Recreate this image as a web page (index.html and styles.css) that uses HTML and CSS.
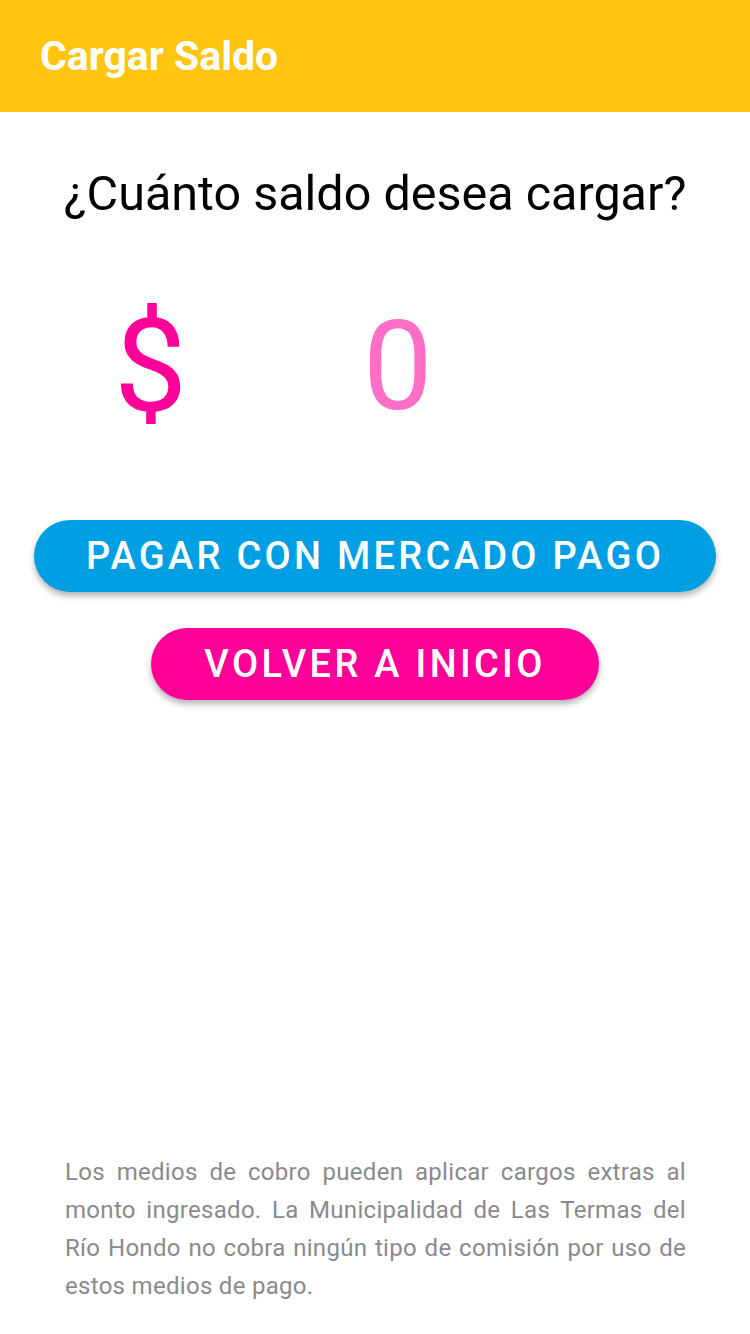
FILE: index.html
```html
<!DOCTYPE html>
<html lang="es">
<head>
<meta charset="utf-8">
<title>Cargar Saldo</title>
<link rel="stylesheet" href="styles.css">
</head>
<body>
<div class="screen">
  <header class="appbar">
    <h1 class="appbar-title">Cargar Saldo</h1>
  </header>
  <main class="content">
    <h2 class="question">¿Cuánto saldo desea cargar?</h2>
    <div class="amount">
      <span class="currency">$</span>
      <span class="value">0</span>
    </div>
    <div class="actions">
      <button class="btn btn-blue">PAGAR CON MERCADO PAGO</button>
      <button class="btn btn-pink">VOLVER A INICIO</button>
    </div>
  </main>
  <footer class="note">
    <p>Los medios de cobro pueden aplicar cargos extras al monto ingresado. La Municipalidad de Las Termas del Río Hondo no cobra ningún tipo de comisión por uso de estos medios de pago.</p>
  </footer>
</div>
</body>
</html>
```
FILE: styles.css
```css
* { box-sizing: border-box; }
html, body { margin: 0; padding: 0; background: #fff; }
body { font-family: Roboto, "Noto Sans", sans-serif; }
.screen {
  width: 750px;
  height: 1334px;
  display: flex;
  flex-direction: column;
}
.appbar {
  height: 112px;
  background: #FFC510;
  display: flex;
  align-items: center;
  padding-left: 40px;
}
.appbar-title {
  margin: 0;
  color: #fff;
  font-weight: 700;
  font-size: 41px;
  line-height: 1;
}
.content {
  flex: 1;
  display: flex;
  flex-direction: column;
  align-items: center;
}
.question {
  margin: 54px 0 0;
  font-weight: 400;
  font-size: 48.5px;
  line-height: 56px;
  color: #000;
}
.amount {
  margin-top: 70px;
  width: 100%;
  display: flex;
  align-items: center;
  height: 150px;
}
.currency {
  margin-left: 114px;
  color: #FF0099;
  font-size: 130px;
  line-height: 1;
}
.value {
  margin-left: 176px;
  color: #FF6EC7;
  font-size: 124px;
  line-height: 1;
}
.actions {
  margin-top: 78px;
  display: flex;
  flex-direction: column;
  align-items: center;
  gap: 36px;
}
.btn {
  border: none;
  height: 72px;
  border-radius: 36px;
  color: #fff;
  font-family: Roboto, sans-serif;
  font-size: 38px;
  font-weight: 500;
  letter-spacing: 3.3px;
  padding: 0;
  box-shadow: 0 4px 6px rgba(0,0,0,0.3);
}
.btn-blue { width: 682px; background: #009FE3; }
.btn-pink { width: 448px; background: #FF0099; }
.note {
  padding: 0 64px 29px 65px;
}
.note p {
  margin: 0;
  color: #8a8a8a;
  font-size: 24px;
  line-height: 38px;
  text-align: justify;
  letter-spacing: 0.3px;
}
```
